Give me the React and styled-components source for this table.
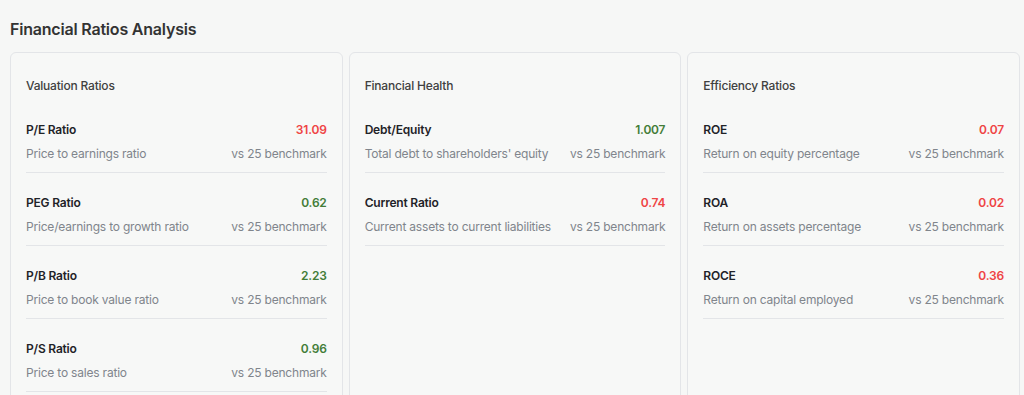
import React from "react";
import styled, { createGlobalStyle } from "styled-components";

const GlobalStyle = createGlobalStyle`
  * {
    box-sizing: border-box;
  }
  body {
    margin: 0;
    background: #f6f7f6;
    font-family: Inter, "Noto Sans", "Liberation Sans", sans-serif;
    color: #1f2328;
    letter-spacing: -0.2px;
  }
`;

const Page = styled.div`
  padding: 18px 4px 0 10px;
`;

const Heading = styled.h2`
  margin: 0 0 12px 0;
  font-size: 16px;
  line-height: 22px;
  font-weight: 600;
  color: #333333;
`;

const Grid = styled.div`
  display: grid;
  grid-template-columns: repeat(3, 1fr);
  gap: 6px;
`;

const Card = styled.section`
  background: #f7f8f7;
  border: 1px solid #e3e5e8;
  border-radius: 6px;
  padding: 25px 15px 40px 15px;
  min-height: 420px;
`;

const CardTitle = styled.h3`
  margin: 0 0 6px 0;
  font-size: 12px;
  line-height: 16px;
  font-weight: 500;
  color: #404040;
`;

const Row = styled.div`
  padding: 21.5px 0 10px 0;
  border-bottom: 1px solid #e3e5e8;
`;

const Line = styled.div`
  display: flex;
  justify-content: space-between;
  align-items: center;
  font-size: 12px;
  line-height: 16px;
`;

const Name = styled.span`
  font-weight: 600;
  color: #1f2328;
`;

const Value = styled.span`
  font-weight: 600;
  color: ${(p) => (p.$good ? "#437d38" : "#ef4444")};
`;

const Desc = styled(Line)`
  margin-top: 8.5px;
  color: #80858c;
`;

const groups = [
  {
    title: "Valuation Ratios",
    rows: [
      { name: "P/E Ratio", value: "31.09", good: false, desc: "Price to earnings ratio" },
      { name: "PEG Ratio", value: "0.62", good: true, desc: "Price/earnings to growth ratio" },
      { name: "P/B Ratio", value: "2.23", good: true, desc: "Price to book value ratio" },
      { name: "P/S Ratio", value: "0.96", good: true, desc: "Price to sales ratio" },
    ],
  },
  {
    title: "Financial Health",
    rows: [
      { name: "Debt/Equity", value: "1.007", good: true, desc: "Total debt to shareholders' equity" },
      { name: "Current Ratio", value: "0.74", good: false, desc: "Current assets to current liabilities" },
    ],
  },
  {
    title: "Efficiency Ratios",
    rows: [
      { name: "ROE", value: "0.07", good: false, desc: "Return on equity percentage" },
      { name: "ROA", value: "0.02", good: false, desc: "Return on assets percentage" },
      { name: "ROCE", value: "0.36", good: false, desc: "Return on capital employed" },
    ],
  },
];

export default function App() {
  return (
    <>
      <GlobalStyle />
      <Page>
        <Heading>Financial Ratios Analysis</Heading>
        <Grid>
          {groups.map((g) => (
            <Card key={g.title}>
              <CardTitle>{g.title}</CardTitle>
              {g.rows.map((r) => (
                <Row key={r.name}>
                  <Line>
                    <Name>{r.name}</Name>
                    <Value $good={r.good}>{r.value}</Value>
                  </Line>
                  <Desc>
                    <span>{r.desc}</span>
                    <span>vs 25 benchmark</span>
                  </Desc>
                </Row>
              ))}
            </Card>
          ))}
        </Grid>
      </Page>
    </>
  );
}
